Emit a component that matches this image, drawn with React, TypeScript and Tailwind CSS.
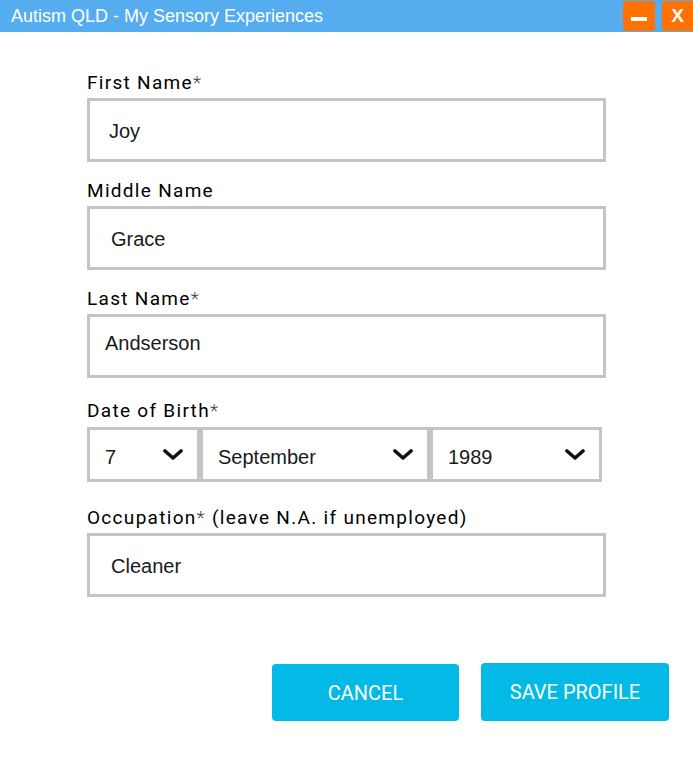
import React from 'react';

const labelCls =
  "block h-[24px] leading-[24px] text-[19px] tracking-[1.3px] text-black font-['Roboto',sans-serif]";
const inputCls =
  "block w-[519px] h-[64px] border-[3px] border-[#c4c4c4] bg-white text-[20px] text-[#1a1a1a] font-['Liberation_Sans',Arial,sans-serif] outline-none";

const Star = () => <span className="text-[#444] font-light">*</span>;

const Chevron = () => (
  <svg width="20" height="11" viewBox="0 0 20 11" className="shrink-0">
    <path d="M2 2 L10 9 L18 2" fill="none" stroke="#111" strokeWidth="3.6" strokeLinecap="round" strokeLinejoin="round" />
  </svg>
);

const Select = ({ value, width }: { value: string; width: string }) => (
  <div
    className={`${width} h-[55px] border-[3px] border-[#c4c4c4] bg-white flex items-center justify-between pl-[15px] pr-[14px] pt-[5px] text-[20px] text-[#1a1a1a] font-['Liberation_Sans',Arial,sans-serif]`}
  >
    <span>{value}</span>
    <span className="-mt-[5px]">
      <Chevron />
    </span>
  </div>
);

export default function App() {
  return (
    <div className="w-[693px] h-[768px] bg-white relative">
      {/* title bar */}
      <div className="h-[32px] bg-[#55adf0] flex items-center justify-between pl-[11px] pr-0">
        <span className="text-white text-[18px] font-['Liberation_Sans',Arial,sans-serif]">
          Autism QLD - My Sensory Experiences
        </span>
        <div className="flex gap-[7px] self-start mt-[1px]">
          <button className="w-[32px] h-[30px] bg-[#ff7100] rounded-[3px] flex items-center justify-center">
            <span className="block w-[16px] h-[4px] bg-white mt-[6px]" />
          </button>
          <button className="w-[31px] h-[30px] bg-[#ff7100] rounded-l-[3px] flex items-center justify-center text-white text-[19px] font-bold font-['Liberation_Sans',Arial,sans-serif]">
            X
          </button>
        </div>
      </div>

      <form className="pl-[87px] pt-[39px]">
        <label className={labelCls}>
          First Name<Star />
        </label>
        <input className={`${inputCls} mt-[3px] pt-[2px] pl-[19px]`} defaultValue="Joy" />

        <label className={`${labelCls} mt-[17px]`}>Middle Name</label>
        <input className={`${inputCls} mt-[3px] pt-[2px] pl-[21px]`} defaultValue="Grace" />

        <label className={`${labelCls} mt-[17px]`}>
          Last Name<Star />
        </label>
        <input className={`${inputCls} mt-[3px] pb-[6px] pl-[15px]`} defaultValue="Andserson" />

        <label className={`${labelCls} mt-[21px]`}>
          Date of Birth<Star />
        </label>
        <div className="flex mt-[4px]">
          <Select value="7" width="w-[113px]" />
          <Select value="September" width="w-[230px]" />
          <Select value="1989" width="w-[172px]" />
        </div>

        <label className={`${labelCls} mt-[24px]`}>
          Occupation<Star /> (leave N.A. if unemployed)
        </label>
        <input className={`${inputCls} mt-[3px] pt-[2px] pl-[21px]`} defaultValue="Cleaner" />
      </form>

      <div className="flex justify-end gap-[22px] pr-[24px] mt-[66px]">
        <button className="w-[187px] h-[57px] mt-[1px] rounded-[4px] bg-[#03b9e6] text-white text-[20px] font-['Roboto',sans-serif]">
          CANCEL
        </button>
        <button className="w-[188px] h-[58px] rounded-[4px] bg-[#03b9e6] text-white text-[20px] font-['Roboto',sans-serif]">
          SAVE PROFILE
        </button>
      </div>
    </div>
  );
}
